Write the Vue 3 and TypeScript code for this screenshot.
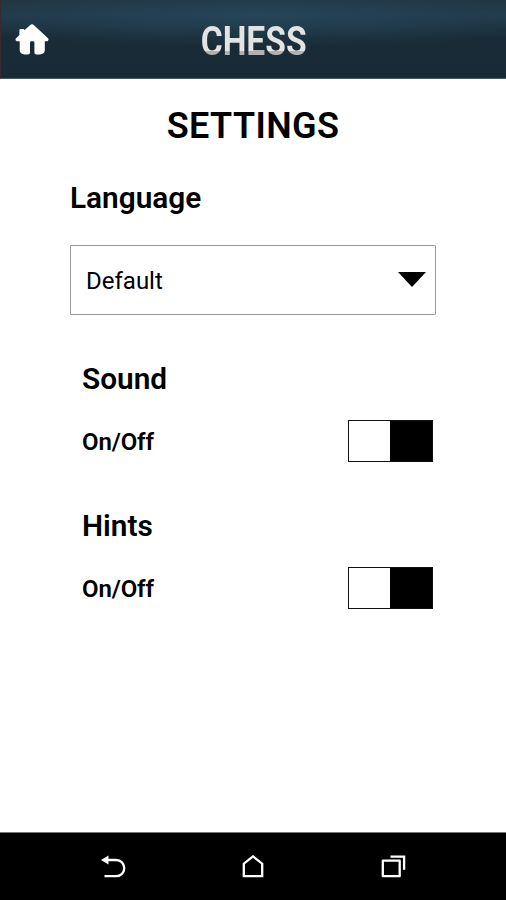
<script setup lang="ts">
import { reactive } from 'vue'

interface Setting {
  key: string
  title: string
  on: boolean
}

const settings = reactive<Setting[]>([
  { key: 'sound', title: 'Sound', on: true },
  { key: 'hints', title: 'Hints', on: true },
])
</script>

<template>
  <div class="screen">
    <header class="topbar">
      <svg class="home" viewBox="0 0 34 31" width="34" height="31">
        <path
          d="M15 1.2Q17 -.6 19 1.2L33 14.2Q34.4 15.8 32.5 17.2H29.8V26.5Q29.5 30 25 30.4H21.5Q19.4 30.4 19.4 28.4V18.5Q19.4 17.2 18 17.2H16.3Q15 17.2 15 18.5V28.4Q15 30.4 13 30.4H9.5Q5 30 4.7 26.5V17.2H1.8Q-.4 16 1 14.2L4.4 11V6.3Q4.4 5 5.7 5H8.2Q9.4 5 9.4 6.3Z"
        />
      </svg>
      <h1 class="logo">CHESS</h1>
    </header>

    <main class="content">
      <h2 class="heading">SETTINGS</h2>

      <h3 class="label language">Language</h3>
      <div class="select">
        <span class="value">Default</span>
        <svg class="arrow" viewBox="0 0 28 15" width="28" height="15">
          <path d="M0 0H28L14 15Z" />
        </svg>
      </div>

      <section v-for="item in settings" :key="item.key" class="setting">
        <h3 class="label">{{ item.title }}</h3>
        <div class="row">
          <span class="state">On/Off</span>
          <button class="toggle" :class="{ on: item.on }" @click="item.on = !item.on">
            <span class="knob"></span>
          </button>
        </div>
      </section>
    </main>

    <nav class="navbar">
      <svg viewBox="0 0 26 24" width="26" height="24">
        <path class="solid" d="M1 5L8.5 .5V9.5Z" />
        <path class="line" d="M8 5H16.2A8.1 8.1 0 0 1 16.2 21.2H4.5" />
      </svg>
      <svg viewBox="0 0 22 24" width="22" height="24">
        <path class="line" d="M1.8 21.2V8.7L11 1.4L20.2 8.7V21.2Z" />
      </svg>
      <svg viewBox="0 0 26 24" width="26" height="24">
        <path class="line" d="M2.8 5.7H19.7V21.2H2.8Z" stroke-linejoin="round" />
        <path class="line" d="M10.5 1.7H24.1V14.7" />
      </svg>
    </nav>
  </div>
</template>

<style>
body {
  background: #fff;
}
</style>

<style scoped>
.screen {
  display: flex;
  flex-direction: column;
  width: 506px;
  height: 900px;
  background: #fff;
  color: #000;
  font-family: Roboto, 'Liberation Sans', sans-serif;
  overflow: hidden;
}

h1,
h2,
h3 {
  margin: 0;
}

.topbar {
  display: grid;
  grid-template-columns: 70px 1fr 70px;
  box-sizing: border-box;
  height: 79px;
  border-bottom: 1px solid #4b5a65;
  border-left: 1px solid #3c2830;
  background:
    radial-gradient(ellipse 330px 32px at 51% 16px, rgba(40, 74, 96, 0.7), rgba(37, 68, 88, 0.45) 50%, rgba(30, 55, 72, 0) 100%),
    linear-gradient(#20343f 0, #213a49 14px, #1d3542 24px, #192b37 38px, #182a36 100%);
}

.home {
  margin: 24px 0 0 14px;
  fill: #fff;
}

.logo {
  justify-self: center;
  height: 48px;
  margin-top: 17px;
  font-size: 41px;
  line-height: 48px;
  font-weight: 700;
  background: linear-gradient(#e3e3e3 0 34px, #b1b1b1 34px 100%);
  background-clip: text;
  color: transparent;
  transform: scaleX(0.82);
}

.content {
  flex: 1;
  padding: 0 70px;
}

.heading {
  height: 42px;
  margin-top: 26px;
  font-size: 36px;
  line-height: 42px;
  font-weight: 600;
  letter-spacing: 0.4px;
  text-align: center;
}

.label {
  height: 36px;
  font-size: 29.8px;
  line-height: 36px;
  font-weight: 600;
}

.language {
  margin-top: 33px;
}

.select {
  display: flex;
  align-items: center;
  justify-content: space-between;
  box-sizing: border-box;
  height: 70px;
  margin-top: 29px;
  padding: 0 9px 0 15px;
  border: 1px solid #999;
  border-radius: 1px;
  font-size: 24px;
}

.value {
  padding-top: 2px;
}

.arrow {
  margin-bottom: 2px;
}

.setting {
  height: 147px;
  padding: 0 3px 0 12px;
}

.select + .setting {
  margin-top: 46px;
}

.row {
  display: flex;
  align-items: center;
  justify-content: space-between;
  height: 42px;
  margin-top: 23px;
}

.state {
  padding-top: 2px;
  font-size: 24px;
  font-weight: 600;
  letter-spacing: -0.15px;
}

.toggle {
  display: flex;
  width: 85px;
  height: 42px;
  padding: 0;
  border: 1px solid #111;
  border-radius: 0;
  background: #fff;
}

.toggle.on {
  justify-content: flex-end;
}

.knob {
  width: 42px;
  height: 40px;
  background: #000;
}

.navbar {
  display: flex;
  align-items: center;
  justify-content: space-between;
  box-sizing: border-box;
  height: 68px;
  padding: 0 100px;
  border-top: 1px solid #777;
  background: #000;
}

.solid {
  fill: #fff;
}

.line {
  fill: none;
  stroke: #fff;
  stroke-width: 2.3;
}
</style>
